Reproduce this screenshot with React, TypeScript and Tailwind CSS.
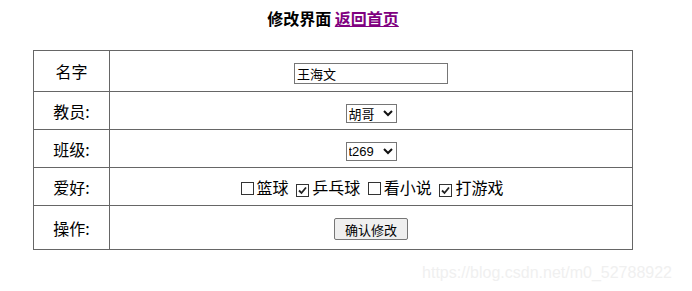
import React from "react";

function Box({ checked }: { checked?: boolean }) {
  return (
    <span className="inline-flex w-[13px] h-[13px] border border-[#333] bg-white items-center justify-center ml-[4px] mr-[3px] align-[-1px]">
      {checked && (
        <svg width="9" height="9" viewBox="0 0 9 9">
          <path d="M1 4.5 L3.5 7 L8 1.5" fill="none" stroke="#222" strokeWidth="1.8" />
        </svg>
      )}
    </span>
  );
}

function Select({ value, latin }: { value: string; latin?: boolean }) {
  return (
    <span className="relative inline-block align-middle">
      <select
        className={`appearance-none h-[19px] w-[51px] border border-[#767676] text-[13px] leading-[17px] pl-[2px] bg-white block ${
          latin ? "font-['Liberation_Sans',sans-serif]" : ""
        }`}
      >
        <option>{value}</option>
      </select>
      <svg
        className="absolute right-[4px] top-[6px] pointer-events-none"
        width="10"
        height="7"
        viewBox="0 0 10 7"
      >
        <path d="M1 1 L5 5 L9 1" fill="none" stroke="#111" strokeWidth="2" />
      </svg>
    </span>
  );
}

const cell = "border border-[#666] text-center";

export default function App() {
  return (
    <div className="relative w-[692px] h-[291px] bg-white text-black font-['Noto_Sans_CJK_SC',sans-serif]">
      <div className="ml-[33px] w-[600px] pt-[8px]">
        <h3 className="text-center text-[16px] font-bold leading-[20px] font-['Noto_Sans_CJK_SC',sans-serif]">
          修改界面 <a href="#" className="text-[#800080] underline">返回首页</a>
        </h3>
        <table className="mt-[22px] w-[600px] border-collapse text-[16px]">
          <tbody>
            <tr className="h-[41px]">
              <td className={`${cell} w-[76px]`}>名字</td>
              <td className={cell}>
                <input
                  defaultValue="王海文"
                  className="w-[154px] h-[21px] border border-[#767676] px-[2px] text-[13px] align-middle bg-white"
                />
              </td>
            </tr>
            <tr className="h-[38px]">
              <td className={cell}>教员:</td>
              <td className={cell}>
                <Select value="胡哥" />
              </td>
            </tr>
            <tr className="h-[38px]">
              <td className={cell}>班级:</td>
              <td className={cell}>
                <Select value="t269" latin />
              </td>
            </tr>
            <tr className="h-[38px]">
              <td className={cell}>爱好:</td>
              <td className={cell}>
                <span className="whitespace-nowrap pr-[2px]">
                  <Box />篮球 <Box checked />乒乓球 <Box />看小说 <Box checked />打游戏
                </span>
              </td>
            </tr>
            <tr className="h-[44px]">
              <td className={cell}>操作:</td>
              <td className={cell}>
                <button className="w-[74px] h-[22px] border border-[#767676] bg-[#efefef] rounded-[2px] text-[13px] align-middle">
                  确认修改
                </button>
              </td>
            </tr>
          </tbody>
        </table>
      </div>
      <div className="absolute right-[20px] top-[261px] text-[16px] text-[#f0f0f0] font-['Liberation_Sans',sans-serif]">
        https://blog.csdn.net/m0_52788922
      </div>
    </div>
  );
}
